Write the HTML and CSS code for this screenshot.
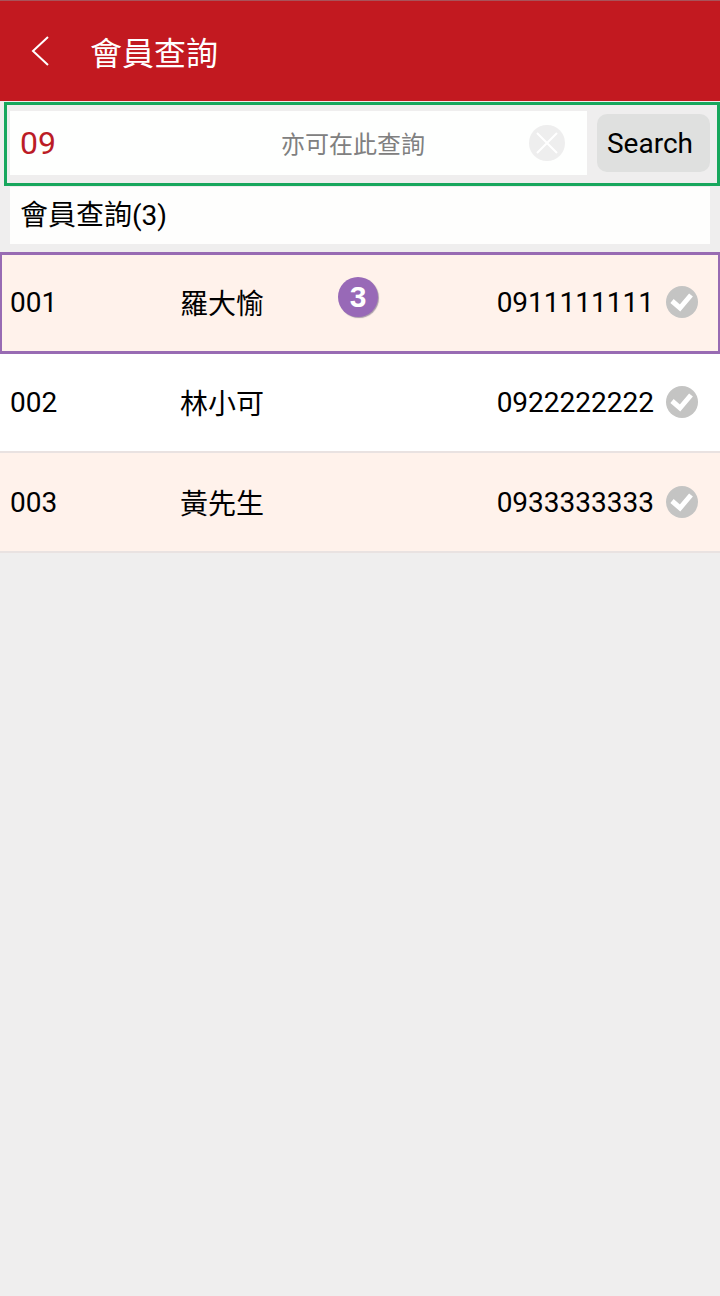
FILE: index.html
```html
<!DOCTYPE html>
<html lang="zh-Hant">
<head>
    <meta charset="UTF-8">
    <meta name="viewport" content="width=device-width, initial-scale=1.0">
    <title>會員查詢</title>
    <link rel="stylesheet" href="styles.css">
</head>
<body>

<header class="top-bar">
  <button type="button" class="back-btn" aria-label="Back">
    <svg width="20" height="32" viewBox="0 0 20 32" fill="none" stroke="#fff" stroke-width="2">
      <path d="M18 2 L3 16 L18 30"/>
    </svg>
  </button>
  <h1>會員查詢</h1>
</header>

<main>
  <form class="search-form">
    <div class="search-box">
      <input type="text" id="keyword" class="search-input" value="09" aria-labelledby="keywordHint">
      <label for="keyword" id="keywordHint" class="search-hint">亦可在此查詢</label>
      <button type="reset" class="clear-btn" aria-label="Clear">
        <svg width="36" height="36" viewBox="0 0 36 36">
          <circle cx="18" cy="18" r="18" fill="#eeeeee"/>
          <path d="M8 8 L28 28 M28 8 L8 28" stroke="#fff" stroke-width="2"/>
        </svg>
      </button>
    </div>
    <button type="button" class="search-btn">Search</button>
  </form>

  <h2 class="result-title">會員查詢(3)</h2>

  <!-- member list -->
  <div class="member-list">
    <table class="member-table">
      <tbody>
        <tr class="selected">
          <td class="col-no">001</td>
          <td>羅大愉</td>
          <td class="col-phone">0911111111</td>
          <td class="col-check">
            <label class="check">
              <input type="checkbox" aria-label="001">
              <svg viewBox="0 0 32 32"><path d="M6 15 L14 22 L25 9" /></svg>
            </label>
          </td>
        </tr>
        <tr>
          <td class="col-no">002</td>
          <td>林小可</td>
          <td class="col-phone">0922222222</td>
          <td class="col-check">
            <label class="check">
              <input type="checkbox" aria-label="002">
              <svg viewBox="0 0 32 32"><path d="M6 15 L14 22 L25 9" /></svg>
            </label>
          </td>
        </tr>
        <tr>
          <td class="col-no">003</td>
          <td>黃先生</td>
          <td class="col-phone">0933333333</td>
          <td class="col-check">
            <label class="check">
              <input type="checkbox" aria-label="003">
              <svg viewBox="0 0 32 32"><path d="M6 15 L14 22 L25 9" /></svg>
            </label>
          </td>
        </tr>
      </tbody>
    </table>
    <span class="step-badge">3</span>
  </div>
</main>

</body>
</html>
```

FILE: styles.css
```css
* {
  box-sizing: border-box;
}

body {
  margin: 0;
  font-family: Roboto, "Noto Sans CJK TC", sans-serif;
  font-size: 28px;
  color: #000;
  background-color: #efeeee;
}

button,
input {
  font-family: inherit;
}

button {
  border: none;
  padding: 0;
  background: none;
  cursor: pointer;
}

.top-bar {
  display: flex;
  align-items: center;
  gap: 40px;
  height: 101px;
  padding: 0 30px;
  border-top: 1px solid #a8535a;
  background-color: #c21920;
  color: #fff;
}

.top-bar h1 {
  margin: 0;
  font-size: 32px;
  font-weight: 400;
}

.back-btn,
.clear-btn {
  display: flex;
}

/* search */
.search-form {
  display: flex;
  align-items: center;
  gap: 10px;
  margin: 1px 0 0 4px;
  padding: 6px 7px 8px 3px;
  border: 3px solid #18a75d;
}

.search-box {
  flex: 1;
  min-width: 0;
  display: flex;
  align-items: center;
  height: 64px;
  padding: 0 22px 0 10px;
  background-color: #fefffe;
}

.search-input {
  flex: 1;
  min-width: 0;
  height: 100%;
  padding: 0;
  border: none;
  outline: none;
  background: none;
  font-size: 32px;
  color: #bb1c26;
}

.search-hint {
  flex-shrink: 0;
  margin-right: 104px;
  font-family: "AR PL UKai TW", "DFKai-SB", "Noto Sans CJK TC", serif;
  font-size: 24px;
  line-height: 32px;
  color: #808080;
}

.search-btn {
  flex-shrink: 0;
  height: 58px;
  padding: 0 17px 0 10px;
  border-radius: 10px;
  background-color: #dfe0df;
  font-size: 28px;
  color: #000;
}

.result-title {
  margin: 1px 10px 9px;
  padding: 0 10px;
  background-color: #fefefd;
  font-size: 28px;
  font-weight: 400;
  line-height: 57px;
}

/* member list */
.member-list {
  position: relative;
}

.member-table {
  width: 100%;
  border-spacing: 0;
}

.member-table tr {
  height: 100px;
  background-color: #fff;
}

.member-table tr:nth-child(odd) {
  background-color: #fff2eb;
}

.member-table tr.selected {
  outline: 3px solid #986bb3;
  outline-offset: -2px;
}

.member-table td {
  padding: 0;
  border-bottom: 2px solid #e9e2e1;
}

.member-table .col-no {
  width: 180px;
  padding-left: 10px;
}

.member-table .col-phone {
  text-align: right;
}

.member-table .col-check {
  width: 66px;
  padding-left: 12px;
}

.check {
  display: grid;
  width: 32px;
  height: 32px;
}

.check input,
.check svg {
  grid-area: 1 / 1;
  width: 32px;
  height: 32px;
  margin: 0;
}

.check input {
  appearance: none;
  border-radius: 50%;
  background-color: #c4c4c3;
}

.check input:checked {
  background-color: #c21920;
}

.check svg {
  fill: none;
  stroke: #fff;
  stroke-width: 5;
  pointer-events: none;
}

.step-badge {
  position: absolute;
  top: 24px;
  left: 338px;
  width: 40px;
  height: 40px;
  border-radius: 50%;
  background-color: #9869b7;
  box-shadow: 1px 1px 1px #a89aa8;
  font-family: "Liberation Sans", Arial, sans-serif;
  font-size: 30px;
  font-weight: 700;
  line-height: 40px;
  text-align: center;
  color: #fff;
}
```
